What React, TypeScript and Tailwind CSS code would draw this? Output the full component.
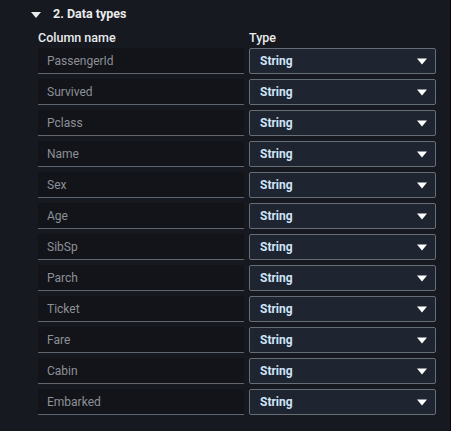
const columns = [
  "PassengerId",
  "Survived",
  "Pclass",
  "Name",
  "Sex",
  "Age",
  "SibSp",
  "Parch",
  "Ticket",
  "Fare",
  "Cabin",
  "Embarked",
];

const Caret = ({ className }: { className?: string }) => (
  <svg width="10" height="6" viewBox="0 0 10 6" className={className}>
    <path d="M0 0 H10 L5 6 Z" fill="currentColor" />
  </svg>
);

export default function App() {
  return (
    <div
      className="w-[451px] h-[431px] bg-[#16191f] border-r border-[#05070a] text-[12px]"
      style={{ fontFamily: '"Roboto", "Liberation Sans", sans-serif' }}
    >
      {/* Section header */}
      <div className="flex items-center h-[29px] pl-[31px]">
        <Caret className="text-[#e9ebed] w-[10px] h-[6px]" />
        <span className="ml-[12px] font-bold text-[12.5px] text-[#e9ebed]">2. Data types</span>
      </div>

      <div className="pl-[38px] pr-[14px]">
        <div className="grid grid-cols-[206px_187px] gap-x-[5px] h-[19px] pb-[5px] items-center">
          <span className="font-medium text-[12.5px] text-[#e9ebed]">Column name</span>
          <span className="font-medium text-[12.5px] text-[#e9ebed]">Type</span>
        </div>

        <div className="flex flex-col gap-[5px]">
          {columns.map((name) => (
            <div key={name} className="grid grid-cols-[206px_187px] gap-x-[5px]">
              <div className="h-[26px] flex items-center px-[9px] bg-[#121419] border-b border-[#5f6670] rounded-t-[2px] text-[#8c9097]">
                {name}
              </div>
              <div className="h-[26px] flex items-center justify-between pl-[10px] pr-[8px] bg-[#1e2531] border border-[#676d75] rounded-[2px]">
                <span className="font-bold text-[#cfe4f8]">String</span>
                <Caret className="text-white w-[10px] h-[7px]" />
              </div>
            </div>
          ))}
        </div>
      </div>
    </div>
  );
}
